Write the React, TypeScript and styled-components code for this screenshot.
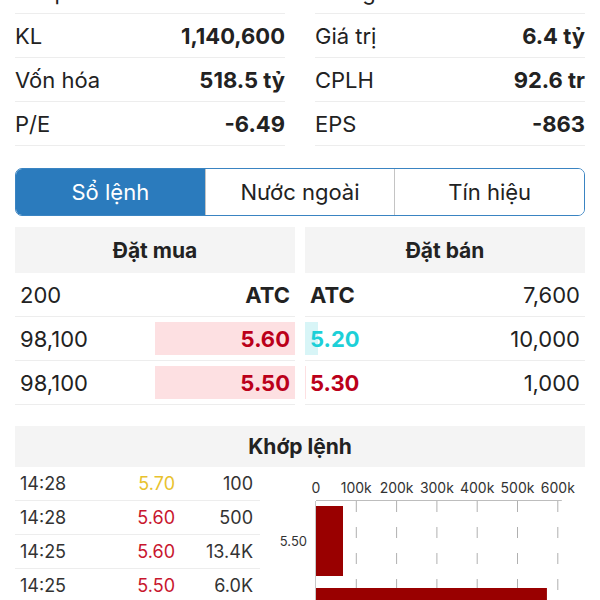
import styled, { createGlobalStyle } from 'styled-components';

const GlobalStyle = createGlobalStyle`
  html, body {
    margin: 0;
    padding: 0;
    background: #ffffff;
  }
  body {
    font-family: Inter, "Noto Sans", "Liberation Sans", sans-serif;
    color: #222222;
  }
`;

const Page = styled.div`
  width: 600px;
  height: 600px;
  overflow: hidden;
  padding: 0 15px;
  box-sizing: border-box;
`;

const StatsGrid = styled.div`
  display: grid;
  grid-template-columns: 1fr 1fr;
  column-gap: 30px;
  margin-top: -30px;
`;

const StatRow = styled.div`
  display: flex;
  align-items: center;
  justify-content: space-between;
  height: 44px;
  box-sizing: border-box;
  border-bottom: 1px solid #ededed;
  font-size: 22px;

  .label {
    font-weight: 400;
  }
  .value {
    font-weight: 700;
  }
`;

const Tabs = styled.div`
  display: flex;
  margin-top: 22px;
  height: 48px;
  box-sizing: border-box;
  border: 1px solid #3a84c2;
  border-radius: 7px;
  overflow: hidden;
`;

const Tab = styled.div<{ $active?: boolean }>`
  flex: 1;
  display: flex;
  align-items: center;
  justify-content: center;
  font-size: 22px;
  background: ${(p) => (p.$active ? '#2b7bbd' : '#ffffff')};
  color: ${(p) => (p.$active ? '#ffffff' : '#222222')};

  & + & {
    border-left: 1px solid #c4c4c4;
  }
`;

const BookGrid = styled.div`
  display: grid;
  grid-template-columns: 1fr 1fr;
  column-gap: 10px;
  margin-top: 11px;
`;

const SectionHeader = styled.div<{ $height: number }>`
  display: flex;
  align-items: center;
  justify-content: center;
  height: ${(p) => p.$height}px;
  background: #f4f4f4;
  font-size: 21px;
  font-weight: 700;
`;

const BookRow = styled.div`
  position: relative;
  display: flex;
  align-items: center;
  justify-content: space-between;
  height: 44px;
  box-sizing: border-box;
  padding: 0 5px;
  border-bottom: 1px solid #ededed;
  font-size: 22px;

  span {
    position: relative;
  }
`;

const DepthBar = styled.div<{ $side: 'buy' | 'sell'; $color: string }>`
  position: absolute;
  top: 5px;
  bottom: 5px;
  ${(p) => (p.$side === 'buy' ? 'right: 0;' : 'left: 0;')}
  background: ${(p) => p.$color};
`;

const Price = styled.span<{ $color: string }>`
  font-weight: 700;
  color: ${(p) => p.$color};
`;

const MatchSection = styled.div`
  margin-top: 21px;
`;

const MatchBody = styled.div`
  display: flex;
`;

const TradeList = styled.div`
  width: 245px;
  flex-shrink: 0;
`;

const TradeRow = styled.div`
  display: grid;
  grid-template-columns: 1fr 80px 78px;
  align-items: center;
  height: 34px;
  box-sizing: border-box;
  padding: 0 7px 0 5px;
  border-bottom: 1px solid #ededed;
  font-size: 18px;
  color: #333333;

  .vol {
    text-align: right;
  }
`;

const TradePrice = styled.span<{ $color: string }>`
  text-align: right;
  color: ${(p) => p.$color};
`;

const Chart = styled.svg`
  display: block;
  flex-shrink: 0;
  margin-right: -15px;
  font-family: Inter, "Noto Sans", "Liberation Sans", sans-serif;
`;

const stats = [
  ['Thấp nhất', '5.50', 'Trung bình', '5.62'],
  ['KL', '1,140,600', 'Giá trị', '6.4 tỷ'],
  ['Vốn hóa', '518.5 tỷ', 'CPLH', '92.6 tr'],
  ['P/E', '-6.49', 'EPS', '-863'],
];

const RED = '#bb001a';

const buys = [
  { qty: '200', price: 'ATC', color: '#222222', bar: 0 },
  { qty: '98,100', price: '5.60', color: RED, bar: 50 },
  { qty: '98,100', price: '5.50', color: RED, bar: 50 },
];

const sells = [
  { qty: '7,600', price: 'ATC', color: '#222222', bar: 0, barColor: '#fde0e2' },
  { qty: '10,000', price: '5.20', color: '#1dd0d8', bar: 4.6, barColor: '#d8f5f7' },
  { qty: '1,000', price: '5.30', color: RED, bar: 0.4, barColor: '#fde0e2' },
];

const trades = [
  { time: '14:28', price: '5.70', color: '#e8c22e', vol: '100' },
  { time: '14:28', price: '5.60', color: '#c8162e', vol: '500' },
  { time: '14:25', price: '5.60', color: '#c8162e', vol: '13.4K' },
  { time: '14:25', price: '5.50', color: '#c8162e', vol: '6.0K' },
];

const volumeBars = [
  { label: '5.50', value: 67000 },
  { label: '5.60', value: 573000 },
];

const X0 = 56;
const STEP = 40.3;
const ticks = [0, 1, 2, 3, 4, 5, 6];

const VolumeChart = () => (
  <Chart width={340} height={133} viewBox="0 0 340 133">
    {ticks.map((t) => (
      <text
        key={t}
        x={X0 + t * STEP}
        y={26}
        fontSize={14}
        fill="#333"
        textAnchor="middle"
      >
        {t === 0 ? '0' : `${t}00k`}
      </text>
    ))}
    <line x1={X0} y1={33.5} x2={X0 + 6 * STEP + 4} y2={33.5} stroke="#bdbdbd" strokeWidth={1} />
    {ticks.slice(1).map((t) => (
      <line
        key={t}
        x1={X0 + t * STEP}
        y1={34}
        x2={X0 + t * STEP}
        y2={133}
        stroke="#b0b0b0"
        strokeWidth={1}
        strokeDasharray="11 15"
      />
    ))}
    <line x1={X0 - 0.5} y1={34} x2={X0 - 0.5} y2={133} stroke="#c8c8c8" strokeWidth={1} />
    {volumeBars.map((b, i) => {
      const y = 39 + i * 82;
      const w = (b.value / 100000) * STEP;
      return (
        <g key={b.label}>
          <rect x={X0} y={y} width={w} height={70} fill="#990000" />
          <text x={X0 - 9} y={y + 40} fontSize={13} fill="#333" textAnchor="end">
            {b.label}
          </text>
        </g>
      );
    })}
  </Chart>
);

const App = () => {
  return (
    <>
      <GlobalStyle />
      <Page>
        <StatsGrid>
          {stats.flatMap((s) => [
            <StatRow key={s[0]}>
              <span className="label">{s[0]}</span>
              <span className="value">{s[1]}</span>
            </StatRow>,
            <StatRow key={s[2]}>
              <span className="label">{s[2]}</span>
              <span className="value">{s[3]}</span>
            </StatRow>,
          ])}
        </StatsGrid>

        <Tabs>
          <Tab $active>Sổ lệnh</Tab>
          <Tab>Nước ngoài</Tab>
          <Tab>Tín hiệu</Tab>
        </Tabs>

        <BookGrid>
          <div>
            <SectionHeader $height={46}>Đặt mua</SectionHeader>
            {buys.map((b, i) => (
              <BookRow key={i}>
                {b.bar > 0 && <DepthBar $side="buy" $color="#fde0e2" style={{ width: `${b.bar}%` }} />}
                <span>{b.qty}</span>
                <Price $color={b.color}>{b.price}</Price>
              </BookRow>
            ))}
          </div>
          <div>
            <SectionHeader $height={46}>Đặt bán</SectionHeader>
            {sells.map((s, i) => (
              <BookRow key={i}>
                {s.bar > 0 && <DepthBar $side="sell" $color={s.barColor} style={{ width: `${s.bar}%` }} />}
                <Price $color={s.color}>{s.price}</Price>
                <span>{s.qty}</span>
              </BookRow>
            ))}
          </div>
        </BookGrid>

        <MatchSection>
          <SectionHeader $height={41}>Khớp lệnh</SectionHeader>
          <MatchBody>
            <TradeList>
              {trades.map((t, i) => (
                <TradeRow key={i}>
                  <span>{t.time}</span>
                  <TradePrice $color={t.color}>{t.price}</TradePrice>
                  <span className="vol">{t.vol}</span>
                </TradeRow>
              ))}
            </TradeList>
            <VolumeChart />
          </MatchBody>
        </MatchSection>
      </Page>
    </>
  );
};

export default App;
